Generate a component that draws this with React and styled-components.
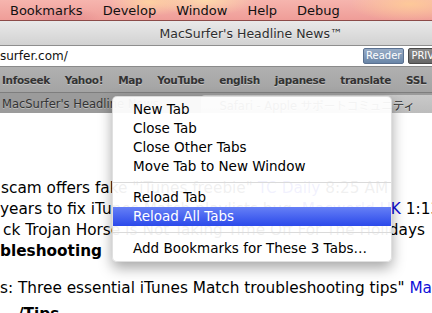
import styled, { createGlobalStyle } from 'styled-components';

const GlobalStyle = createGlobalStyle`
	html, body {
		margin: 0;
		padding: 0;
		overflow: hidden;
		background: #ffffff;
	}
`;

const UI_FONT = `"Lucida Grande", "DejaVu Sans", "Noto Sans CJK JP", sans-serif`;

const BOOKMARKS = ['Infoseek', 'Yahoo!', 'Map', 'YouTube', 'english', 'japanese', 'translate', 'SSL'];
const MENU_BAR = ['Bookmarks', 'Develop', 'Window', 'Help', 'Debug'];

const Screen = styled.div`
	position: relative;
	width: 432px;
	height: 313px;
	overflow: hidden;
	font-family: ${UI_FONT};
	background: #ffffff;
`;

const MenuBar = styled.div`
	display: flex;
	align-items: center;
	height: 21px;
	border-bottom: 1px solid #8c4b48;
	box-sizing: border-box;
	background:
		radial-gradient(ellipse 40px 14px at 150px 2px, rgba(255, 214, 160, 0.85), transparent),
		radial-gradient(ellipse 50px 16px at 205px 0px, rgba(255, 226, 170, 0.8), transparent),
		radial-gradient(ellipse 60px 18px at 410px 4px, rgba(255, 205, 150, 0.85), transparent),
		radial-gradient(ellipse 40px 12px at 60px 18px, rgba(214, 120, 130, 0.5), transparent),
		linear-gradient(#f6b5ae, #ef9d98);
`;

const MenuTitle = styled.span`
	padding: 0 10px;
	font-size: 13px;
	color: #111111;
	line-height: 21px;
`;

const TitleBar = styled.div`
	display: flex;
	align-items: center;
	justify-content: center;
	height: 24px;
	padding-left: 70px;
	font-size: 12.5px;
	color: #2e2e2e;
	text-shadow: 0 1px 0 rgba(255, 255, 255, 0.6);
	border-bottom: 1px solid #8e8e8e;
	background: linear-gradient(#e9e9e9, #d2d2d2);
`;

const AddressField = styled.div`
	display: flex;
	align-items: center;
	height: 20px;
	font-size: 12px;
	color: #111111;
	white-space: nowrap;
	background: #ffffff;
	border-bottom: 1px solid #8a8a8a;
`;

const Url = styled.span`
	flex: 0 0 359px;
`;

const Badge = styled.span`
	flex-shrink: 0;
	height: 14px;
	margin-left: 4px;
	padding: 0 2px;
	border-radius: 2px;
	font-size: 10px;
	line-height: 14px;
	color: #ffffff;
	border: 1px solid ${(p) => (p.$tone === 'reader' ? '#5b7190' : '#4a4a4a')};
	background: ${(p) =>
		p.$tone === 'reader'
			? 'linear-gradient(#98acc6, #6a86a8)'
			: 'linear-gradient(#8a8a8a, #666666)'};
`;

const BookmarksBar = styled.div`
	display: flex;
	align-items: center;
	gap: 15px;
	height: 25px;
	padding-left: 2px;
	white-space: nowrap;
	background: linear-gradient(#b0b0b0, #a4a4a4);
	border-bottom: 1px solid #7e7e7e;
`;

const Bookmark = styled.span`
	font-size: 10.5px;
	font-weight: bold;
	letter-spacing: -0.35px;
	color: #333333;
	text-shadow: 0 1px 0 rgba(255, 255, 255, 0.35);
`;

const TabBar = styled.div`
	display: flex;
	align-items: flex-end;
	height: 20px;
	background: #9b9b9b;
	white-space: nowrap;
`;

const Tab = styled.div`
	display: flex;
	align-items: center;
	height: ${(p) => (p.$active ? '18px' : '20px')};
	padding: ${(p) => (p.$active ? '1px 17px 0 0' : '1px 0 0 2px')};
	box-sizing: border-box;
	flex: ${(p) => (p.$active ? '1' : '0 0 201px')};
	justify-content: ${(p) => (p.$active ? 'flex-end' : 'flex-start')};
	border-radius: ${(p) => (p.$active ? '4px 0 0 0' : '0')};
	font-size: 11.5px;
	color: #333333;
	text-shadow: 0 1px 0 rgba(255, 255, 255, 0.35);
	background: ${(p) => (p.$active ? 'linear-gradient(#c9c9c9, #bcbcbc)' : 'transparent')};
	overflow: hidden;
`;

const Content = styled.div`
	padding-top: 65px;
	font-size: 15.3px;
	color: #000000;
	white-space: nowrap;
`;

const Line = styled.div`
	height: 21px;
	line-height: 21px;
	padding-left: ${(p) => p.$indent || 0}px;
	font-weight: ${(p) => (p.$bold ? 'bold' : 'normal')};
	margin-bottom: ${(p) => p.$gap || 0}px;
`;

const Source = styled.span`
	color: #1010d8;
`;

const Menu = styled.div`
	position: absolute;
	left: 112px;
	top: 96px;
	width: 280px;
	padding: 3px 0 3px;
	box-sizing: border-box;
	border-radius: 5px;
	background: rgba(255, 255, 255, 0.94);
	border: 1px solid rgba(0, 0, 0, 0.12);
	box-shadow: 0 6px 14px rgba(0, 0, 0, 0.35);
	font-size: 13.5px;
`;

const Item = styled.div`
	height: 19px;
	line-height: 19px;
	padding-left: 20px;
	color: ${(p) => (p.$hover ? '#ffffff' : '#000000')};
	background: ${(p) => (p.$hover ? 'linear-gradient(#6680f6, #2b49ea)' : 'transparent')};
`;

const Separator = styled.div`
	height: 1px;
	margin: ${(p) => (p.$tall ? '6px 0 6px' : '6px 0 5px')};
	background: #dadada;
`;

function ContextMenu() {
	return (
		<Menu>
			<Item>New Tab</Item>
			<Item>Close Tab</Item>
			<Item>Close Other Tabs</Item>
			<Item>Move Tab to New Window</Item>
			<Separator />
			<Item>Reload Tab</Item>
			<Item $hover>Reload All Tabs</Item>
			<Separator $tall />
			<Item>Add Bookmarks for These 3 Tabs…</Item>
		</Menu>
	);
}

export default function App() {
	return (
		<Screen>
			<GlobalStyle />
			<MenuBar>
				{MENU_BAR.map((m) => (
					<MenuTitle key={m}>{m}</MenuTitle>
				))}
			</MenuBar>
			<TitleBar>MacSurfer's Headline News™</TitleBar>
			<AddressField>
				<Url>surfer.com/</Url>
				<Badge $tone="reader">Reader</Badge>
				<Badge $tone="priv">PRIVATE</Badge>
			</AddressField>
			<BookmarksBar>
				{BOOKMARKS.map((b) => (
					<Bookmark key={b}>{b}</Bookmark>
				))}
			</BookmarksBar>
			<TabBar>
				<Tab>MacSurfer's Headline News</Tab>
				<Tab $active>Safari - Apple サポートコミュニティ</Tab>
			</TabBar>
			<Content>
				<Line $indent={1}>
					{' '}scam offers fake "iTunes freebie" <Source>TC Daily</Source> 8:25 AM
				</Line>
				<Line>
					years to fix iTunes Match playlists bug, <Source>Macworld UK</Source> 1:13 PM
				</Line>
				<Line $indent={3}>ck Trojan Horse Is Not Taking Time Off For The Holidays</Line>
				<Line $bold $gap={16}>
					bleshooting
				</Line>
				<Line $gap={5}>
					s: Three essential iTunes Match troubleshooting tips" <Source>Macworld</Source>
				</Line>
				<Line $bold $indent={18}>
					/Tips
				</Line>
			</Content>
			<ContextMenu />
		</Screen>
	);
}
